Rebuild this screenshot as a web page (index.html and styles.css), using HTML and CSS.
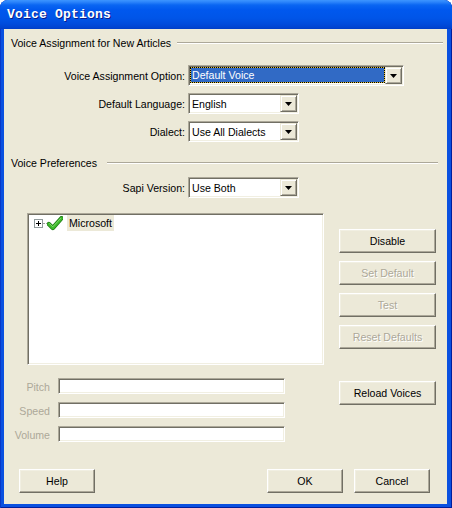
FILE: index.html
```html
<!DOCTYPE html>
<html>
<head>
<meta charset="utf-8">
<title>Voice Options</title>
<link rel="stylesheet" href="styles.css">
</head>
<body>
<div class="window">
  <div class="titlebar"><span class="title">Voice Options</span></div>
  <div class="client">
    <div class="group-head first"><span>Voice Assignment for New Articles</span><i class="rule"></i></div>

    <div class="frow after-head">
      <span class="lbl">Voice Assignment Option:</span>
      <div class="combo wide">
        <span class="combo-text focus"><span class="sel">Default Voice</span></span>
        <span class="combo-btn"><svg width="7" height="4" viewBox="0 0 7 4"><polygon points="0,0 7,0 3.5,4" fill="#000"/></svg></span>
      </div>
    </div>
    <div class="frow">
      <span class="lbl">Default Language:</span>
      <div class="combo">
        <span class="combo-text">English</span>
        <span class="combo-btn"><svg width="7" height="4" viewBox="0 0 7 4"><polygon points="0,0 7,0 3.5,4" fill="#000"/></svg></span>
      </div>
    </div>
    <div class="frow">
      <span class="lbl">Dialect:</span>
      <div class="combo">
        <span class="combo-text">Use All Dialects</span>
        <span class="combo-btn"><svg width="7" height="4" viewBox="0 0 7 4"><polygon points="0,0 7,0 3.5,4" fill="#000"/></svg></span>
      </div>
    </div>

    <div class="group-head second"><span>Voice Preferences</span><i class="rule"></i></div>

    <div class="frow">
      <span class="lbl">Sapi Version:</span>
      <div class="combo">
        <span class="combo-text">Use Both</span>
        <span class="combo-btn"><svg width="7" height="4" viewBox="0 0 7 4"><polygon points="0,0 7,0 3.5,4" fill="#000"/></svg></span>
      </div>
    </div>

    <div class="pane">
      <div class="left">
        <div class="tree">
          <div class="tree-item">
            <svg class="expander" width="9" height="9" viewBox="0 0 9 9">
              <rect x="0.5" y="0.5" width="8" height="8" fill="#fff" stroke="#919B9C"/>
              <path d="M2 4.5H7M4.5 2V7" stroke="#000" stroke-width="1"/>
            </svg>
            <i class="dots"></i>
            <svg class="check" width="16" height="15" viewBox="0 0 16 15">
              <path d="M1.8 8 L5.8 12 L14.5 2.2" fill="none" stroke="#1E7A14" stroke-width="4.4" stroke-linecap="round" stroke-linejoin="round"/>
              <path d="M1.8 8 L5.8 12 L14.5 2.2" fill="none" stroke="#3DBA2C" stroke-width="2.8" stroke-linecap="round" stroke-linejoin="round"/>
              <path d="M2.6 7.6 L5.8 10.8 L13.6 2.4" fill="none" stroke="#8EE07A" stroke-width="0.8" stroke-linecap="round"/>
            </svg>
            <span class="node-text">Microsoft</span>
          </div>
        </div>
        <div class="sliders">
          <div class="srow"><span class="slbl">Pitch</span><span class="sfield"></span></div>
          <div class="srow"><span class="slbl">Speed</span><span class="sfield"></span></div>
          <div class="srow"><span class="slbl">Volume</span><span class="sfield"></span></div>
        </div>
      </div>
      <div class="actions">
        <button class="btn">Disable</button>
        <button class="btn disabled">Set Default</button>
        <button class="btn disabled">Test</button>
        <button class="btn disabled">Reset Defaults</button>
        <button class="btn reload">Reload Voices</button>
      </div>
    </div>

    <div class="footer">
      <button class="btn small">Help</button>
      <button class="btn small ok">OK</button>
      <button class="btn small cancel">Cancel</button>
    </div>
  </div>
</div>
</body>
</html>
```

FILE: styles.css
```css
html, body {
  margin: 0;
  padding: 0;
  background: #fff;
}
body {
  width: 452px;
  height: 508px;
  overflow: hidden;
}
.window {
  width: 452px;
  height: 508px;
  box-sizing: border-box;
  display: flex;
  flex-direction: column;
  background: #0A50E0;
  border-radius: 8px 8px 0 0;
  overflow: hidden;
  box-shadow: inset 1px 0 #0838C8, inset -1px 0 #001E9C, inset 0 -1px #001E9C;
  font-family: "Liberation Sans", Arial, sans-serif;
  font-size: 10.6px;
  color: #000;
}
.titlebar {
  flex: none;
  height: 29px;
  display: flex;
  align-items: center;
  padding-left: 7px;
  background: linear-gradient(180deg, #3D95FF 0, #2C85FB 2px, #0A66F2 5px, #0058EE 10px, #0055E8 18px, #004BDC 24px, #0042CF 28px, #003CC2 29px);
}
.title {
  font-family: "Liberation Mono", "DejaVu Sans Mono", monospace;
  font-weight: bold;
  font-size: 13px;
  color: #fff;
  text-shadow: 1px 1px #0A1C8C;
  letter-spacing: 0.2px;
}
.client {
  flex: 1;
  margin: 0 5px 4px 4px;
  background: #ECE9D8;
  display: flex;
  flex-direction: column;
}
.group-head {
  display: flex;
  align-items: center;
  height: 14px;
  padding-left: 7px;
  white-space: nowrap;
}
.group-head.first { margin-top: 7px; }
.group-head.second { margin-top: 14px; }
.rule {
  flex: 1;
  height: 0;
  border-top: 1px solid #ACA899;
  border-bottom: 1px solid #fff;
}
.first .rule { margin-left: 6px; margin-right: 4px; }
.second .rule { margin-left: 10px; margin-right: 9px; }

.frow {
  display: flex;
  align-items: center;
  height: 21px;
  margin-top: 7px;
}
.frow.after-head { margin-top: 15px; }
.lbl {
  flex: none;
  width: 181px;
  margin-right: 3px;
  text-align: right;
  white-space: nowrap;
}
.combo {
  box-sizing: border-box;
  width: 111px;
  height: 21px;
  display: flex;
  border: 1px solid;
  border-color: #ACA899 #fff #fff #ACA899;
  padding: 1px;
  box-shadow: inset 1px 1px #716F64, inset -1px -1px #F1EFE2;
  background: #fff;
}
.combo.wide { width: 216px; }
.combo-text {
  flex: 1;
  display: flex;
  align-items: center;
  padding-left: 2px;
  white-space: nowrap;
  overflow: hidden;
}
.combo-text.focus {
  padding-left: 0;
  align-items: flex-start;
}
.sel {
  flex: 1;
  box-sizing: border-box;
  height: 16px;
  display: flex;
  align-items: center;
  padding-left: 1px;
  border: 1px dotted #000;
  background: linear-gradient(#316AC5, #316AC5) padding-box, #E2C13A border-box;
  color: #fff;
}
.combo-btn {
  flex: none;
  width: 17px;
  box-sizing: border-box;
  border: 1px solid;
  border-color: #ECE9D8 #716F64 #716F64 #ECE9D8;
  box-shadow: inset 1px 1px #fff, inset -1px -1px #ACA899;
  background: #ECE9D8;
  display: flex;
  align-items: center;
  justify-content: center;
}
.combo-btn svg { display: block; }

.pane {
  display: grid;
  grid-template-columns: 320px 97px;
  column-gap: 15px;
  margin-top: 15px;
}
.left {
  display: flex;
  flex-direction: column;
}
.tree {
  margin-left: 23px;
  width: 297px;
  height: 152px;
  box-sizing: border-box;
  border: 1px solid;
  border-color: #ACA899 #fff #fff #ACA899;
  box-shadow: inset 1px 1px #716F64, inset -1px -1px #F1EFE2;
  background: #fff;
  padding: 1px;
}
.tree-item {
  display: flex;
  align-items: center;
  height: 16px;
  padding-left: 5px;
}
.expander { display: block; flex: none; }
.dots {
  width: 4px;
  height: 0;
  border-top: 1px dotted #A0A0A0;
}
.check { display: block; flex: none; }
.node-text {
  margin-left: 4px;
  height: 16px;
  line-height: 16px;
  padding: 0 2px;
  background: #ECE9D8;
}
.sliders {
  display: flex;
  flex-direction: column;
  gap: 8px;
  margin-top: 13px;
}
.srow {
  display: flex;
  align-items: center;
  height: 16px;
}
.slbl {
  width: 46px;
  margin-right: 8px;
  text-align: right;
  color: #ACA899;
  padding-top: 2px;
}
.sfield {
  width: 227px;
  height: 16px;
  box-sizing: border-box;
  border: 1px solid;
  border-color: #ACA899 #fff #fff #ACA899;
  box-shadow: inset 1px 1px #716F64, inset -1px -1px #F1EFE2;
  background: #fff;
}
.actions {
  display: flex;
  flex-direction: column;
  gap: 8px;
  padding-top: 16px;
}
.btn {
  box-sizing: border-box;
  width: 97px;
  height: 24px;
  margin: 0;
  padding: 0;
  border: 1px solid;
  border-color: #fff #716F64 #716F64 #fff;
  box-shadow: inset -1px -1px #ACA899, inset 1px 1px #F1EFE2;
  background: #ECE9D8;
  font: inherit;
  color: #000;
  display: flex;
  align-items: center;
  justify-content: center;
}
.btn.disabled {
  color: #ACA899;
  text-shadow: 1px 1px #fff;
}
.btn.reload { margin-top: 24px; }
.footer {
  display: flex;
  margin-top: 27px;
  padding: 0 17px 0 15px;
}
.btn.small { width: 76px; }
.btn.ok { margin-left: auto; }
.btn.cancel { margin-left: 11px; }
```
